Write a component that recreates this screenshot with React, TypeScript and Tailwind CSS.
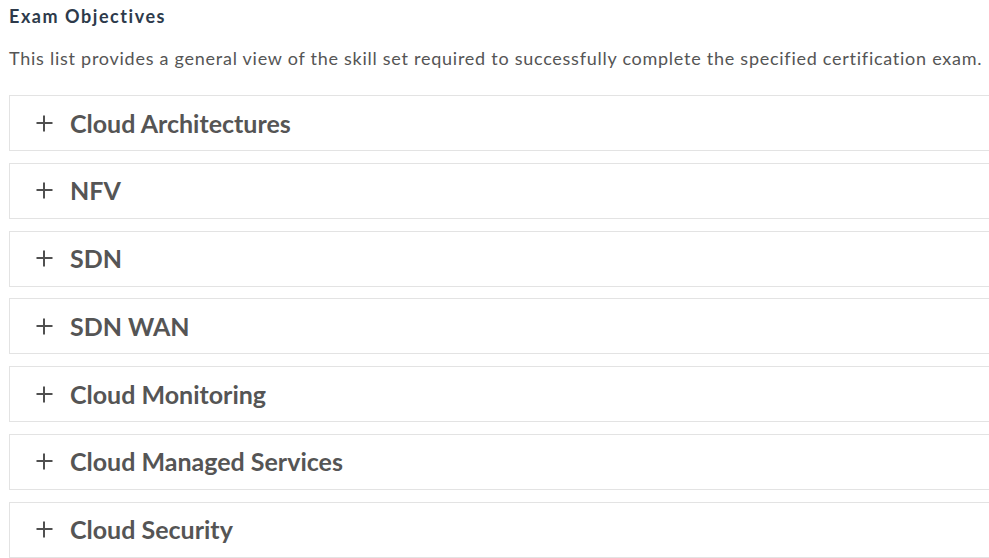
const OBJECTIVES = [
  "Cloud Architectures",
  "NFV",
  "SDN",
  "SDN WAN",
  "Cloud Monitoring",
  "Cloud Managed Services",
  "Cloud Security",
];

const PlusIcon = () => (
  <svg width="17" height="17" viewBox="0 0 17 17" className="shrink-0 text-[#505050]">
    <path d="M8 0.5v16M0.5 8h16" stroke="currentColor" strokeWidth="2" fill="none" />
  </svg>
);

const App = () => {
  return (
    <div className="w-[989px] h-[558px] overflow-hidden bg-white font-['Lato',sans-serif]">
      <div className="pl-[9px] w-[1010px]">
        <h3 className="pt-[4px] text-[18px] leading-[24px] font-bold tracking-[1.55px] text-[#2d3a4b]">Exam Objectives</h3>
        <p className="mt-[18px] text-[18px] leading-[24px] tracking-[0.74px] text-[#555]">
          This list provides a general view of the skill set required to successfully complete the specified certification exam.
        </p>
        <div className="mt-[25px] flex flex-col gap-[11.8px]">
          {OBJECTIVES.map((item) => (
            <div key={item} className="h-[56px] border border-[#e3e3e3] flex items-center pl-[26px] cursor-pointer">
              <PlusIcon />
              <span className="ml-[17px] text-[25px] font-bold text-[#555] leading-none">{item}</span>
            </div>
          ))}
        </div>
      </div>
    </div>
  );
};

export default App;
